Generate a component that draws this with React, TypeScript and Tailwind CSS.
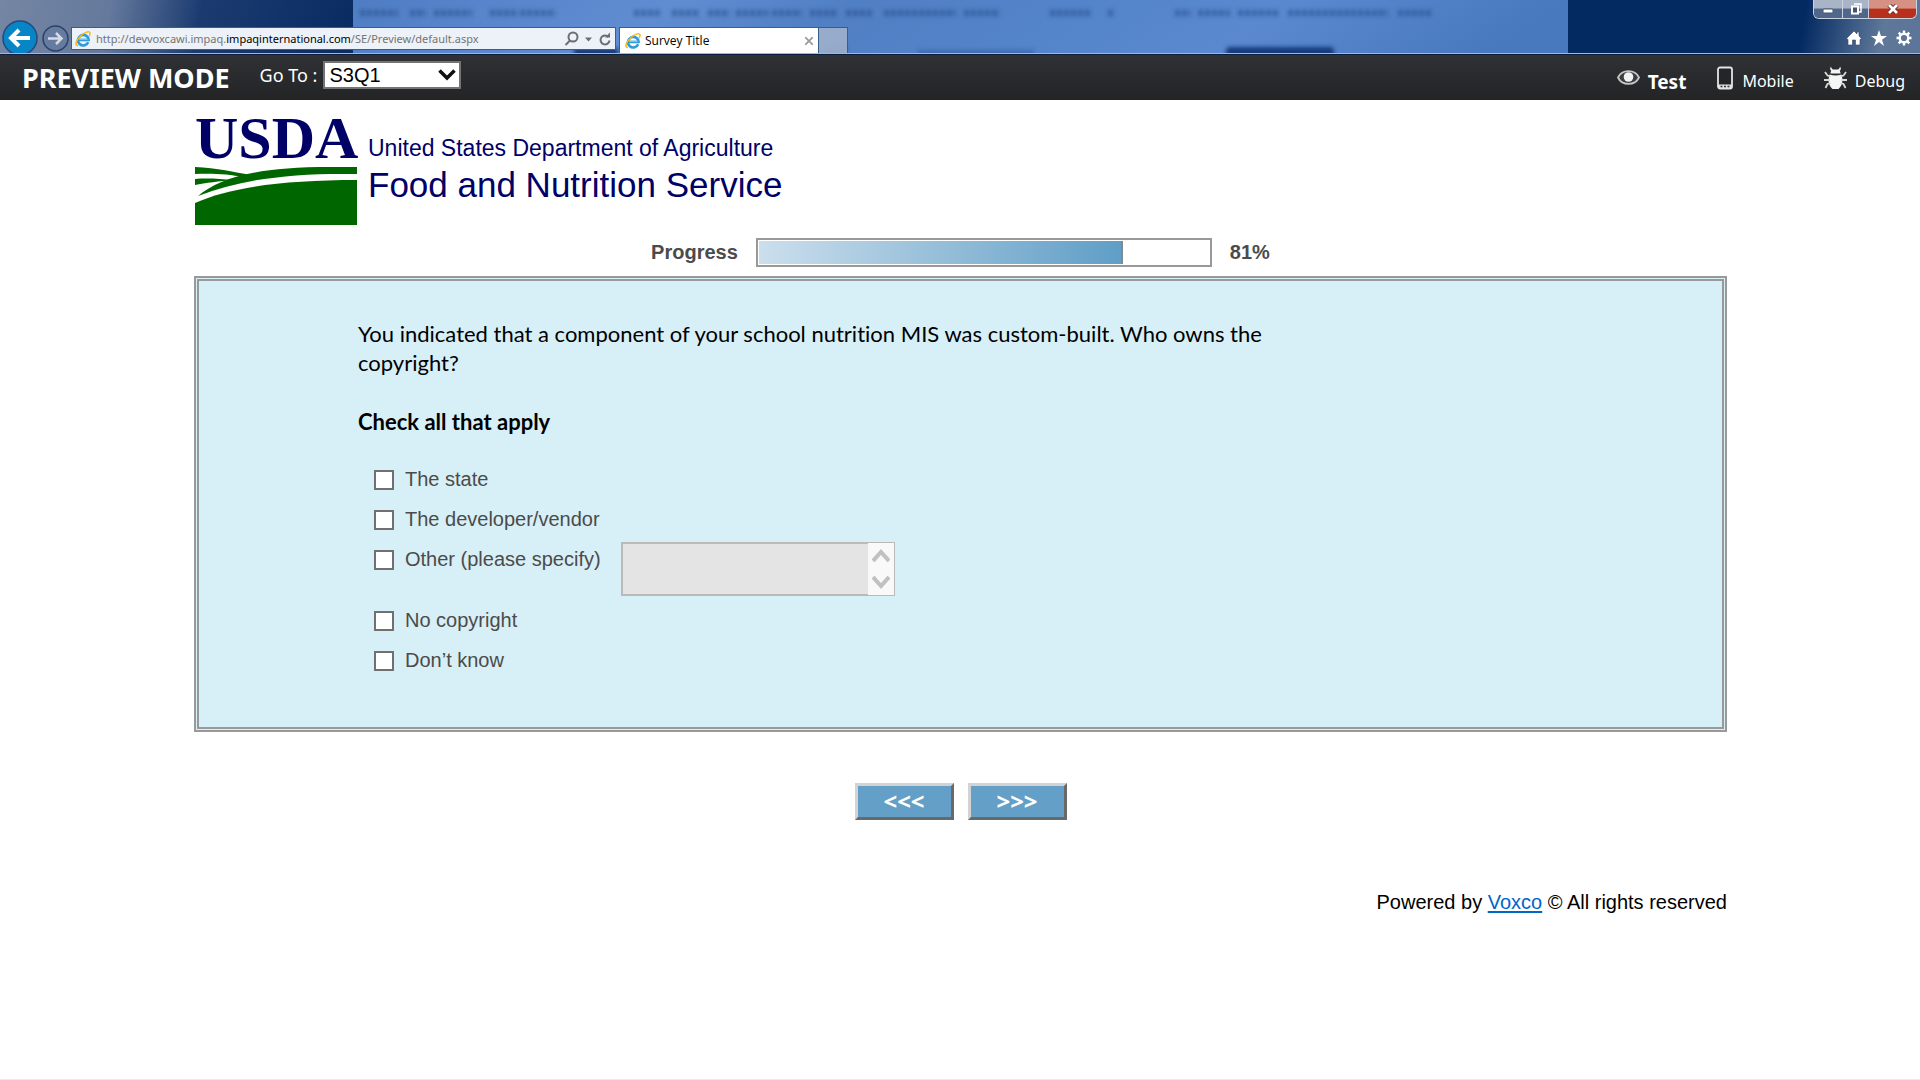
// Survey preview page shown inside a browser window
import type { JSX, ReactNode } from "react";

// Blurred words of the window lying behind the glass title bar: [x, width]
const ghostWords = [
  [360, 38], [410, 16], [434, 38], [490, 26], [520, 36],
  [634, 28], [672, 28], [708, 22], [736, 32], [772, 30], [810, 28], [846, 28], [884, 72], [964, 36],
  [1050, 40], [1108, 6], [1175, 16], [1198, 32], [1238, 40], [1288, 100], [1398, 34],
];

const choices = ["The state", "The developer/vendor", "Other (please specify)", "No copyright", "Don’t know"];

const IeLogo = ({ className }: { className: string }): JSX.Element => (
  <svg className={className} viewBox="0 0 16 16" fill="none" aria-hidden="true">
    <path d="M13.2 11.2A5.3 5.3 0 1 1 13.6 9H4.2" stroke="#2f9bd8" strokeWidth="2.6" />
    <path d="M4 8.2h8.6" stroke="#7fd0f4" strokeWidth="1.2" />
    <path d="M3 14.6C-1 14.6 1.4 9 5.6 5 9.6 1 14.4-.4 15 2c.2.9-.2 2-.8 3" stroke="#f5b916" strokeWidth="1.5" />
  </svg>
);

const TitleBar = (): JSX.Element => (
  <header className="relative flex h-[54px] items-end overflow-hidden bg-[linear-gradient(100deg,#7586a3_0px,#64799c_110px,#1b3b70_200px,#0a2c63_350px,#042a62_1560px,#042a62_1780px,#5f7899_1860px,#5a7297_1920px)]">
    {/* Wallpaper and the window behind the glass */}
    <svg className="absolute inset-0 h-full w-full" aria-hidden="true">
      <defs>
        <linearGradient id="glass" x1="0" x2="1" y1="0" y2="0.1">
          <stop offset="0" stopColor="#4d7cc2" />
          <stop offset="0.12" stopColor="#5784ca" />
          <stop offset="0.28" stopColor="#608dd2" />
          <stop offset="0.42" stopColor="#517fc4" />
          <stop offset="0.63" stopColor="#5484ca" />
          <stop offset="0.78" stopColor="#5a89d0" />
          <stop offset="1" stopColor="#4878be" />
        </linearGradient>
        <filter id="soft" filterUnits="userSpaceOnUse" x="340" y="-10" width="1240" height="80">
          <feGaussianBlur stdDeviation="2" />
        </filter>
      </defs>
      <rect x="353" y="-10" width="1215" height="80" fill="url(#glass)" />
      <g filter="url(#soft)" fill="#2d5797" fillOpacity="0.55">
        {ghostWords.map(([x, w]) => (
          <line key={x} x1={x} x2={x + w} y1="13" y2="13" stroke="#254d8b" strokeOpacity="0.65" strokeWidth="6" strokeDasharray="5 2" />
        ))}
        <rect x="574" y="48" width="44" height="8" fill="#133a78" fillOpacity="1" />
        <rect x="826" y="46" width="20" height="10" fill="#233f6d" />
        <rect x="918" y="50" width="116" height="6" />
        <rect x="1226" y="47" width="108" height="12" rx="4" fill="#153b7c" fillOpacity="1" />
      </g>
    </svg>

    <nav className="relative flex h-full w-full items-end" aria-label="Browser">
      <button aria-label="Back" className="ml-[2px] h-[34px] w-9 shrink-0">
        <svg className="h-[34px] w-9" viewBox="0 0 36 34">
          <circle cx="18" cy="18" r="17" fill="#0885c7" stroke="#27487a" strokeWidth="1.5" />
          <path d="M28 18H10M17 10l-8 8 8 8" fill="none" stroke="#fff" strokeWidth="4" />
        </svg>
      </button>
      <button aria-label="Forward" className="mb-[2px] ml-1 h-[27px] w-[27px] shrink-0">
        <svg viewBox="0 0 27 27">
          <circle cx="13.5" cy="13.5" r="12.5" fill="#5f789f" fillOpacity="0.5" stroke="#2b4268" strokeWidth="1.5" />
          <path d="M6 13.5h13M14 8l5.5 5.5L14 19" fill="none" stroke="#d4dbe6" strokeWidth="2.5" />
        </svg>
      </button>
      <div className="mb-1 ml-[2px] flex h-[23px] w-[545px] items-center border border-[#3b5c8e] bg-[#edf1f8] px-[3px]">
        <IeLogo className="h-4 w-4" />
        <p className="ml-[5px] flex-1 whitespace-nowrap font-['Noto_Sans'] text-[11px] leading-5 text-[#747474]">
          http://devvoxcawi.impaq.<span className="text-black">impaqinternational.com</span>/SE/Preview/default.aspx
        </p>
        <svg className="h-4 w-12" viewBox="0 0 48 16" fill="none" stroke="#6c6e73" strokeWidth="2" aria-hidden="true">
          <circle cx="9" cy="6" r="4.5" />
          <path d="M6 9.5L1.5 14" />
          <path d="M21 6.5h7l-3.5 4z" fill="#6c6e73" stroke="none" />
          <path d="M44.5 6A4.5 4.5 0 1 0 45.5 9.5" />
          <path d="M41 6.5h5V1.5z" fill="#6c6e73" stroke="none" />
        </svg>
      </div>
      <div className="ml-[3px] flex h-[27px] w-[200px] items-center border border-b-0 border-[#3b5c8e] bg-white px-[5px]">
        <IeLogo className="h-4 w-4" />
        <span className="ml-1 flex-1 font-['Open_Sans'] text-[12px] leading-5 text-black">Survey Title</span>
        <button aria-label="Close tab">
          <svg className="h-2 w-2" viewBox="0 0 8 8" stroke="#9b9b9b" strokeWidth="1.8">
            <path d="M0 0l8 8M8 0L0 8" />
          </svg>
        </button>
      </div>
      <button aria-label="New tab" className="h-[27px] w-[29px] border border-b-0 border-l-0 border-[#3b5c8e] bg-[#9fb0cc]/90" />

      <div className="ml-auto flex h-full flex-col items-end">
        <div className="mr-[3px] flex h-[19px] w-[104px] overflow-hidden rounded-b-md border border-t-0 border-[#c9d3e0]">
          <button aria-label="Minimize" className="flex w-[29px] items-center justify-center border-r border-[#c9d3e0] bg-linear-to-b from-[#a9b5c6] from-45% to-[#50678c] to-50%">
            <svg className="h-3 w-3" viewBox="0 0 12 12">
              <rect x="1" y="6" width="10" height="4" rx="1" fill="#fff" stroke="#44546d" />
            </svg>
          </button>
          <button aria-label="Restore" className="flex w-[26px] items-center justify-center border-r border-[#c9d3e0] bg-linear-to-b from-[#a9b5c6] from-45% to-[#50678c] to-50%">
            <svg className="h-3 w-3" viewBox="0 0 12 12">
              <path d="M4 1h7v8H9" fill="none" stroke="#fff" strokeWidth="1.5" />
              <rect x="2" y="3.5" width="6" height="7" fill="#44546d" stroke="#fff" strokeWidth="2" />
            </svg>
          </button>
          <button aria-label="Close" className="flex flex-1 items-center justify-center bg-linear-to-b from-[#d79084] from-45% to-[#b8301c] to-50%">
            <svg className="h-[10px] w-3" viewBox="0 0 12 10">
              <path d="M2 1l8 8M10 1L2 9" stroke="#5b2a2a" strokeWidth="4.5" />
              <path d="M2 1l8 8M10 1L2 9" stroke="#fff" strokeWidth="2.8" />
            </svg>
          </button>
        </div>
        <div className="mt-[11px] mr-2 flex gap-[9px]">
          <button aria-label="Home">
            <svg className="h-4 w-4" viewBox="0 0 16 16" fill="#fff" stroke="#32486c" strokeWidth="0.6">
              <path d="M8 1L.5 8.5 2 9.5V15h4.500v-5h3v5H14V9.500l1.500-1L13 6V2h-2v2z" />
            </svg>
          </button>
          <button aria-label="Favorites">
            <svg className="h-4 w-4" viewBox="0 0 16 16" fill="#fff">
              <path d="M8 0l2 6h6l-5 3.700L13 16l-5-3.900L3 16l2-6.300L0 6h6z" />
            </svg>
          </button>
          <button aria-label="Tools">
            <svg className="h-4 w-4" viewBox="0 0 16 16" fill="none" stroke="#fff">
              <circle cx="8" cy="8" r="4.3" strokeWidth="2.4" />
              <path d="M8 .5v3M8 12.5v3M.5 8h3M12.500 8h3M2.700 2.700l2 2M11.300 11.300l2 2M13.300 2.700l-2 2M4.700 11.300l-2 2" strokeWidth="2.4" />
            </svg>
          </button>
        </div>
      </div>
    </nav>
    <div className="absolute inset-x-0 bottom-0 h-px bg-[#a3b7da]" />
  </header>
);

const ToolLink = ({ label, bold, children }: { label: string; bold?: boolean; children: ReactNode }): JSX.Element => (
  <a href="#" className="flex items-center gap-2">
    {children}
    <span className={bold ? "pt-2 text-[19px] font-bold" : "pt-[6px] text-[16px]"}>{label}</span>
  </a>
);

const PreviewBar = (): JSX.Element => (
  <div className="flex h-[46px] items-center border-t border-[#0c1c3c] bg-linear-to-b from-[#303134] to-[#232426] pr-[15px] pl-[22px] font-['Noto_Sans'] text-[18px] leading-6 text-white">
    <h1 className="text-[27px] font-bold">PREVIEW MODE</h1>
    <label htmlFor="goto" className="mr-[6px] ml-[30px] pb-[5px]">Go To :</label>
    <div className="relative mb-[6px]">
      <select id="goto" defaultValue="S3Q1" className="block h-7 w-[138px] appearance-none border-2 border-[#757375] bg-white pl-1 font-['Liberation_Sans'] text-[20px] leading-6 text-black">
        <option>S3Q1</option>
      </select>
      <svg className="pointer-events-none absolute top-2 right-[5px] h-3 w-[18px]" viewBox="0 0 18 12" fill="none" stroke="#111" strokeWidth="3.5" aria-hidden="true">
        <path d="M1.5 1.5L9 9l7.500-7.500" />
      </svg>
    </div>
    <div className="ml-auto flex items-center gap-[30px]">
      <ToolLink label="Test" bold>
        <svg className="h-6 w-[23px]" viewBox="0 0 23 24" aria-hidden="true">
          <path d="M1 11.500C5 3 18 3 22 11.500 18 20 5 20 1 11.500z" fill="#3c3d3f" stroke="#c6c6c6" strokeWidth="1.8" />
          <circle cx="11.5" cy="11" r="4.8" fill="#f2f2f2" />
        </svg>
      </ToolLink>
      <ToolLink label="Mobile">
        <svg className="h-6 w-[18px]" viewBox="0 0 18 24" aria-hidden="true">
          <rect x="2" y="1.5" width="14" height="21" rx="2" fill="#242527" stroke="#e4e4e4" strokeWidth="1.8" />
          <path d="M2 18.500h14v3a1 1 0 0 1-1 1H3a1 1 0 0 1-1-1z" fill="#e4e4e4" />
          <path d="M4.500 20.500h2M8 20.500h2M11.500 20.500h2" stroke="#333" strokeWidth="1.5" />
        </svg>
      </ToolLink>
      <ToolLink label="Debug">
        <svg className="h-6 w-[23px]" viewBox="0 0 23 24" fill="#f6f6f6" aria-hidden="true">
          <path d="M7 .5c.2 1.500.8 2.300 2 3h5c1.200-.7 1.800-1.500 2-3 1.300 1.800 1 3.300-.3 4.300.6.800.8 1.700.8 2.700h-10c0-1 .2-1.900.8-2.700C6 3.800 5.700 2.300 7 .5z" />
          <path d="M5.500 8.500c4 1.200 8 1.200 12 0 1.800 6 1 11-3 14.500h-6c-4-3.500-4.800-8.500-3-14.500z" />
          <path d="M1 6l2.500 3.500 3 .8M22 6l-2.500 3.500-3 .8M0 14h6M23 14h-6M1.500 22l2-4 3-1M21.500 22l-2-4-3-1" fill="none" stroke="#d8d8d8" strokeWidth="1.8" />
        </svg>
      </ToolLink>
    </div>
  </div>
);

const AgencyLogo = (): JSX.Element => (
  <div className="flex gap-[11px] pt-3 pl-px text-[#000066]">
    <div className="flex w-[162px] flex-col">
      <span className="h-[55px] font-['Liberation_Serif'] text-[60px] leading-[52px] font-bold">USDA</span>
      <svg className="h-[58px] w-[162px]" viewBox="0 0 162 58" fill="#006600" aria-hidden="true">
        <path d="M0 0C22 1 40 5 55 8L48 10C35 7 15 6 0 7z" />
        <path d="M0 12C12 11 26 12 38 13 25 14 10 16 0 18z" />
        <path d="M3 29C25 11 60 0 135 0H162V7C100 6 50 11 3 29z" />
        <path d="M0 36C35 20 90 13 162 13V58H0z" />
      </svg>
    </div>
    <p className="pt-[22px] font-['Liberation_Sans'] whitespace-nowrap">
      <span className="block text-[23px] leading-7">United States Department of Agriculture</span>
      <span className="block text-[35px] leading-[46px]">Food and Nutrition Service</span>
    </p>
  </div>
);

const ProgressRow = ({ percent }: { percent: number }): JSX.Element => (
  <div className="flex items-center justify-center gap-[18px] pt-[13px] pb-[9px] text-[20px] leading-6 font-bold text-[#4b4b4b]">
    <span className="pb-[2px]">Progress</span>
    <div className="h-[29px] w-[456px] border-2 border-[#999] bg-white p-px">
      <div
        className="h-full border-r-2 border-[#808890] bg-linear-to-r from-[#cbdfec] to-[#5f9ec6]"
        style={{ width: `${percent}%` }}
      />
    </div>
    <span className="pb-[2px]">{percent}%</span>
  </div>
);

const Choice = ({ label, index }: { label: string; index: number }): JSX.Element => {
  const hasText = label.startsWith("Other");
  return (
    <li className={hasText ? "flex h-[61px] items-start" : "flex h-10 items-start"}>
      <input id={`choice-${index}`} type="checkbox" className="mt-2 h-5 w-5 appearance-none border-2 border-[#707070] bg-white" />
      <label htmlFor={`choice-${index}`} className="ml-[11px] pt-[3px]">{label}</label>
      {hasText && (
        <div className="relative ml-5">
          <textarea aria-label="Other, please specify" disabled className="block h-[54px] w-[274px] resize-none border-2 border-[#bababa] bg-[#e4e4e4]" />
          <div className="absolute inset-y-px right-px flex w-[26px] flex-col items-center justify-between bg-[#f9f9f9] py-[6px]">
            <svg className="h-[13px] w-[18px]" viewBox="0 0 18 13" fill="none" stroke="#c1c1c1" strokeWidth="4" aria-hidden="true">
              <path d="M1 12l8-9 8 9" />
            </svg>
            <svg className="h-[13px] w-[18px]" viewBox="0 0 18 13" fill="none" stroke="#c1c1c1" strokeWidth="4" aria-hidden="true">
              <path d="M1 1l8 9 8-9" />
            </svg>
          </div>
        </div>
      )}
    </li>
  );
};

const NavButton = ({ label, name }: { label: string; name: string }): JSX.Element => (
  <button aria-label={name} className="h-[37px] w-[99px] border-3 border-t-[#d3d3d3] border-r-[#696969] border-b-[#696969] border-l-[#d3d3d3] bg-[#639fc6] pb-[2px] font-['Noto_Sans'] text-[24px] leading-6 font-bold text-white">
    {label}
  </button>
);

const App = (): JSX.Element => {
  return (
    <div className="min-h-screen border-b border-[#ececec] bg-white font-['Liberation_Sans',sans-serif]">
      <TitleBar />
      <PreviewBar />
      <main className="mx-auto w-4/5 pr-px pl-[2px]">
        <AgencyLogo />
        <ProgressRow percent={81} />
        {/* Question panel */}
        <form className="border-5 border-double border-[#999] bg-[#d7eff6] px-[159px] pt-[38px] pb-11">
          <div className="max-w-[940px] font-['Lato'] text-[22px] leading-[29px] text-black [font-variant-ligatures:none]">
            <p>
              You indicated that a component of your school nutrition MIS was custom-built. Who owns the copyright?
            </p>
            <p className="mt-[30px] font-bold">Check all that apply</p>
          </div>
          <ul className="mt-[26px] ml-4 text-[20px] leading-7 text-[#4b4b4b]">
            {choices.map((label, i) => (
              <Choice key={label} label={label} index={i} />
            ))}
          </ul>
        </form>
        <div className="flex justify-center gap-[14px] pt-[51px]">
          <NavButton label="<<<" name="Previous" />
          <NavButton label=">>>" name="Next" />
        </div>
        <footer className="pt-[68px] text-right text-[20px] leading-7 text-black">
          Powered by{" "}
          <a href="#" className="text-[#0066cc] underline decoration-2 underline-offset-2">Voxco</a> © All rights reserved
        </footer>
      </main>
    </div>
  );
};

export default App;
